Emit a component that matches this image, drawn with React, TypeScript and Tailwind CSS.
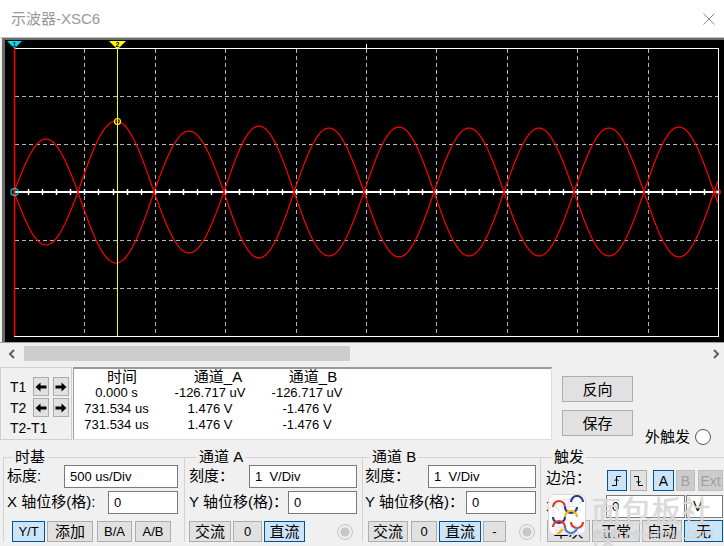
import React from "react";

const FONT = "font-['Liberation_Sans','Noto_Sans_CJK_SC',sans-serif]";

// half-cycle boundaries of the traced waveform (page x coords) and their peak heights
const bounds = [14, 78, 154, 224, 294, 364, 434, 504, 574, 644, 714, 784];
const amps = [53, 71, 61, 66, 64, 65, 64, 64, 64, 65, 64];
const CY = 192;

function waveA(x: number) {
  let h = 0;
  while (h < bounds.length - 2 && x > bounds[h + 1]) h++;
  const s = Math.sin((Math.PI * (x - bounds[h])) / (bounds[h + 1] - bounds[h]));
  return (h % 2 === 1 ? 1 : -1) * amps[h] * s;
}

const xs = Array.from({ length: 353 }, (_, i) => 14 + i * 2);
const ptsA = xs.map((x) => `${x},${(CY - waveA(x)).toFixed(1)}`).join(" ");
const ptsB = xs.map((x) => `${x},${(CY + waveA(x)).toFixed(1)}`).join(" ");
const vLines = Array.from({ length: 9 }, (_, i) => 14 + 70.4 * (i + 1));
const hLines = [96, 144, 240, 288];
const ticks = Array.from({ length: 51 }, (_, i) => 14 + 14.08 * i);

const Screen = () => (
  <svg width="719" height="302" viewBox="5 40 719 302" className="block">
    <rect x="5" y="40" width="719" height="302" fill="#000" />
    {vLines.map((x) => (
      <line key={x} x1={Math.round(x) + 0.5} y1={49} x2={Math.round(x) + 0.5} y2={336} stroke="#b8b8b8" strokeDasharray="4 3" />
    ))}
    {hLines.map((y) => (
      <line key={y} x1={15} y1={y + 0.5} x2={718} y2={y + 0.5} stroke="#b8b8b8" strokeDasharray="4 3" />
    ))}
    <rect x="14.5" y="48.5" width="704" height="288" fill="none" stroke="#fff" />
    <line x1="366.5" y1="44" x2="366.5" y2="48" stroke="#fff" />
    <line x1="14" y1="192" x2="718" y2="192" stroke="#fff" strokeWidth="2" />
    {ticks.map((t) => (
      <line key={t} x1={Math.round(t) + 0.5} y1={189} x2={Math.round(t) + 0.5} y2={195} stroke="#fff" strokeWidth="1.5" />
    ))}
    <polyline points={ptsA} fill="none" stroke="#ff0000" strokeWidth="1.2" />
    <polyline points={ptsB} fill="none" stroke="#ff0000" strokeWidth="1.2" />
    <line x1="14.5" y1="46" x2="14.5" y2="336" stroke="#ff0000" strokeWidth="1.5" />
    <line x1="117.5" y1="47" x2="117.5" y2="336" stroke="#ffff00" />
    <polygon points="7,41 22,41 14.5,48.5" fill="#00e0e8" />
    <text x="14.5" y="46.5" fontSize="7" fontWeight="bold" fill="#003050" textAnchor="middle" fontFamily="Liberation Sans, sans-serif">1</text>
    <polygon points="109,41 126,41 117.5,49.5" fill="#ffff00" />
    <text x="117.5" y="46.5" fontSize="7" fontWeight="bold" fill="#000" textAnchor="middle" fontFamily="Liberation Sans, sans-serif">2</text>
    <circle cx="117.5" cy="121.5" r="3" fill="none" stroke="#ffff00" strokeWidth="1.2" />
    <circle cx="14.5" cy="192" r="3.5" fill="none" stroke="#00e0e8" strokeWidth="1.2" />
    <circle cx="718" cy="192" r="2.5" fill="none" stroke="#ff0000" strokeWidth="1" />
  </svg>
);

const Chevron = ({ dir }: { dir: "l" | "r" }) => (
  <svg width="8" height="10" viewBox="0 0 8 10">
    <path d={dir === "l" ? "M6 1 L2 5 L6 9" : "M2 1 L6 5 L2 9"} fill="none" stroke="#606060" strokeWidth="2" />
  </svg>
);

const Arrow = ({ dir }: { dir: "l" | "r" }) => (
  <svg width="12" height="10" viewBox="0 0 12 10">
    <path d={dir === "l" ? "M0.5 5 L5.5 0.5 V3.5 H11.5 V6.5 H5.5 V9.5 Z" : "M11.5 5 L6.5 0.5 V3.5 H0.5 V6.5 H6.5 V9.5 Z"} fill="#000" />
  </svg>
);

type BtnProps = { className: string; sel?: boolean; dis?: boolean; children: React.ReactNode };
const Btn = ({ className, sel, dis, children }: BtnProps) => (
  <div
    className={`flex items-center justify-center border leading-none ${
      sel ? "bg-[#cce4f7] border-[#005499]" : dis ? "bg-[#cccccc] border-[#bfbfbf] text-[#a0a0a0]" : "bg-[#e1e1e1] border-[#adadad]"
    } ${className}`}
  >
    {children}
  </div>
);

const Field = ({ className, value }: { className: string; value: string }) => (
  <input
    readOnly
    value={value}
    className={`h-[23px] bg-white border border-[#7a7a7a] pl-[5px] text-[13px] outline-none whitespace-pre ${className}`}
  />
);

const Radio = () => (
  <svg width="16" height="16" viewBox="0 0 16 16">
    <circle cx="8" cy="8" r="7.5" fill="#eeeeee" stroke="#c4c4c4" />
    <circle cx="8" cy="8" r="4.5" fill="#c6c6c6" />
  </svg>
);

const Legend = ({ className, children }: { className: string; children: React.ReactNode }) => (
  <legend className={`px-[2px] text-[15px] leading-[16px] ${className}`}>{children}</legend>
);

const rows = [
  ["0.000 s", "-126.717 uV", "-126.717 uV"],
  ["731.534 us", "1.476 V", "-1.476 V"],
  ["731.534 us", "1.476 V", "-1.476 V"],
];

export default function App() {
  return (
    <div className={`relative w-[724px] h-[546px] overflow-hidden bg-[#f0f0f0] flex flex-col text-black ${FONT}`}>
      {/* title bar */}
      <div className="h-[37px] shrink-0 bg-white flex items-center justify-between pl-[11px] pr-[9px]">
        <span className="text-[15px] text-[#999999] leading-none">示波器-XSC6</span>
        <svg width="12" height="12" viewBox="0 0 12 12">
          <path d="M0.5 0.5 L11.5 11.5 M11.5 0.5 L0.5 11.5" stroke="#8a8a8a" strokeWidth="1" />
        </svg>
      </div>

      {/* scope screen */}
      <div className="shrink-0 pl-[2px] border-t border-[#c4c4c4]">
        <div className="border-t-2 border-l-[3px] border-[#6b6b6b]">
          <Screen />
        </div>
      </div>

      {/* horizontal scrollbar */}
      <div className="h-[22px] shrink-0 border-t border-[#a0a0a0] flex items-center">
        <div className="w-[24px] flex justify-center">
          <Chevron dir="l" />
        </div>
        <div className="w-[326px] h-[15px] bg-[#cdcdcd]" />
        <div className="flex-1" />
        <div className="w-[12px] flex justify-start">
          <Chevron dir="r" />
        </div>
      </div>

      {/* cursor readouts */}
      <div className="h-[76px] shrink-0 flex items-start">
        <div className="mt-[3px] w-[72px] h-[73px] border border-[#cfcfcf] flex flex-col pl-[9px] pt-[9px] text-[14px]">
          {["T1", "T2"].map((t, i) => (
            <div key={t} className={`flex items-center h-[19px] ${i ? "mt-[2px]" : ""}`}>
              <span className="w-[23px] leading-none">{t}</span>
              <Btn className="w-[16px] h-[19px]">
                <Arrow dir="l" />
              </Btn>
              <Btn className="ml-[4px] w-[16px] h-[19px]">
                <Arrow dir="r" />
              </Btn>
            </div>
          ))}
          <span className="mt-[3px] leading-[16px]">T2-T1</span>
        </div>

        <div className="mt-[3px] ml-[1px] w-[479px] h-[73px] bg-white border border-[#dcdcdc] border-t-2 border-t-[#9a9a9a] border-l-[#a0a0a0] pl-[9px] text-[13px] leading-[16px]">
          <div className="grid grid-cols-[67px_120px_74px] whitespace-nowrap">
            <span className="text-center pl-[11px] text-[15px]">时间</span>
            <span className="text-center pl-[16px] text-[15px]">通道_A</span>
            <span className="text-center pl-[12px] text-[15px]">通道_B</span>
            {rows.map((r, i) => (
              <React.Fragment key={i}>
                <span className="text-center">{r[0]}</span>
                <span className="text-center">{r[1]}</span>
                <span className="text-center">{r[2]}</span>
              </React.Fragment>
            ))}
          </div>
        </div>

        <div className="ml-[10px] mt-[12px] flex flex-col text-[15px]">
          <Btn className="w-[71px] h-[26px]">反向</Btn>
          <Btn className="mt-[8px] w-[71px] h-[26px]">保存</Btn>
        </div>

        <div className="self-end -mb-[6px] ml-[12px] flex items-center text-[15px] leading-[18px]">
          <span>外触发</span>
          <svg width="16" height="16" viewBox="0 0 16 16" className="ml-[5px]">
            <circle cx="8" cy="8" r="7.5" fill="#fff" stroke="#555" />
          </svg>
        </div>
      </div>

      {/* control groups */}
      <div className="flex-1 flex items-start pt-[9px] text-[15px]">
        <fieldset className="ml-[3px] w-[181px] border-t border-l border-[#d3d3d3] pl-[3px] pr-[6px]">
          <Legend className="ml-[6px]">时基</Legend>
          <div className="h-[23px] flex items-center justify-between">
            <span>标度:</span>
            <Field className="w-[114px]" value="500 us/Div" />
          </div>
          <div className="mt-[3px] h-[23px] flex items-center justify-between">
            <span>X 轴位移(格):</span>
            <Field className="w-[70px]" value="0" />
          </div>
          <div className="mt-[7px] h-[21px] flex items-center">
            <Btn sel className="ml-[5px] w-[33px] h-[21px] text-[13px]">Y/T</Btn>
            <Btn className="ml-[2px] w-[46px] h-[21px]">添加</Btn>
            <Btn className="ml-[4px] w-[35px] h-[21px] text-[13px]">B/A</Btn>
            <Btn className="ml-[3px] w-[36px] h-[21px] text-[13px]">A/B</Btn>
          </div>
        </fieldset>

        <fieldset className="w-[178px] border-t border-l border-[#d3d3d3] pl-[4px] pr-[5px]">
          <Legend className="ml-[8px]">通道 A</Legend>
          <div className="h-[23px] flex items-center justify-between">
            <span>刻度：</span>
            <Field className="w-[108px]" value="1  V/Div" />
          </div>
          <div className="mt-[3px] h-[23px] flex items-center justify-between">
            <span>Y 轴位移(格)：</span>
            <Field className="w-[69px]" value="0" />
          </div>
          <div className="mt-[7px] h-[21px] flex items-center">
            <Btn className="w-[42px] h-[21px]">交流</Btn>
            <Btn className="ml-[2px] w-[29px] h-[21px] text-[13px]">0</Btn>
            <Btn sel className="ml-[2px] w-[41px] h-[21px]">直流</Btn>
            <div className="ml-[32px] flex">
              <Radio />
            </div>
          </div>
        </fieldset>

        <fieldset className="w-[178px] border-t border-l border-[#d3d3d3] pl-[2px] pr-[4px]">
          <Legend className="ml-[5px]">通道 B</Legend>
          <div className="h-[23px] flex items-center justify-between">
            <span>刻度：</span>
            <Field className="w-[108px]" value="1  V/Div" />
          </div>
          <div className="mt-[3px] h-[23px] flex items-center justify-between">
            <span>Y 轴位移(格)：</span>
            <Field className="w-[70px]" value="0" />
          </div>
          <div className="mt-[7px] h-[21px] flex items-center">
            <Btn className="ml-[3px] w-[40px] h-[21px]">交流</Btn>
            <Btn className="ml-[3px] w-[26px] h-[21px] text-[13px]">0</Btn>
            <Btn sel className="ml-[2px] w-[42px] h-[21px]">直流</Btn>
            <Btn className="ml-[2px] w-[23px] h-[21px] text-[13px]">-</Btn>
            <div className="ml-[13px] flex">
              <Radio />
            </div>
          </div>
        </fieldset>

        <fieldset className="flex-1 border-t border-l border-[#d3d3d3] pl-[5px]">
          <Legend className="ml-[6px]">触发</Legend>
          <div className="h-[26px] flex">
            <span className="w-[61px] self-center">边沿：</span>
            <div className="self-end flex">
              <Btn sel className="w-[20px] h-[21px]">
                <svg width="12" height="12" viewBox="0 0 12 12">
                  <path d="M1 10.5 H5.5 V1.5 H10 M3.5 6 L5.5 4 L7.5 6" fill="none" stroke="#000" strokeWidth="1" />
                </svg>
              </Btn>
              <Btn className="ml-[3px] w-[17px] h-[21px]">
                <svg width="12" height="12" viewBox="0 0 12 12">
                  <path d="M1 1.5 H5.5 V10.5 H10 M3.5 6 L5.5 8 L7.5 6" fill="none" stroke="#000" strokeWidth="1" />
                </svg>
              </Btn>
              <Btn sel className="ml-[6px] w-[21px] h-[21px] text-[14px]">A</Btn>
              <Btn dis className="ml-[2px] w-[19px] h-[21px] text-[14px]">B</Btn>
              <Btn dis className="ml-[3px] w-[25px] h-[21px] text-[14px]">Ext</Btn>
            </div>
          </div>
          <div className="mt-[4px] h-[23px] flex items-center">
            <span className="w-[60px]">水平：</span>
            <Field className="w-[79px]" value="0" />
            <div className="ml-[1px] w-[37px] h-[23px] bg-white border border-[#7a7a7a] pl-[6px] text-[14px] flex items-center">V</div>
          </div>
          <div className="mt-[2px] h-[22px] flex items-center">
            <Btn className="ml-[1px] w-[43px] h-[22px]">单次</Btn>
            <Btn className="ml-[2px] w-[48px] h-[22px]">正常</Btn>
            <Btn className="ml-[2px] w-[40px] h-[22px]">自动</Btn>
            <Btn sel className="ml-[2px] w-[39px] h-[22px]">无</Btn>
          </div>
        </fieldset>
      </div>

      {/* site watermark overlay */}
      <div className="absolute left-[548px] top-[494px] w-[38px] h-[41px] rounded-[7px] bg-white/90 border border-[#d8d8d8] overflow-hidden">
        <svg width="38" height="41" viewBox="0 0 38 41">
          <path d="M4 12 A6 6 0 0 1 16 12" fill="none" stroke="#e03a2f" strokeWidth="2.2" />
          <path d="M16 12 A6 6 0 0 0 28 12" fill="none" stroke="#2d3a8c" strokeWidth="2.2" />
          <path d="M22 7 A6 6 0 0 1 34 7" fill="none" stroke="#2d3a8c" strokeWidth="2.2" />
          <path d="M4 22 A6 6 0 0 0 16 22" fill="none" stroke="#2d3a8c" strokeWidth="2.2" />
          <path d="M16 22 A6 6 0 0 1 28 22" fill="none" stroke="#f2b400" strokeWidth="2.2" />
          <path d="M22 27 A6 6 0 0 0 34 27" fill="none" stroke="#e03a2f" strokeWidth="2.2" />
          <path d="M4 32 A6 6 0 0 1 16 32" fill="none" stroke="#e03a2f" strokeWidth="2.2" />
          <path d="M16 32 A6 6 0 0 0 28 32" fill="none" stroke="#4a7fd0" strokeWidth="2.2" />
          <path d="M8 40 L14 34" fill="none" stroke="#f2b400" strokeWidth="2.2" />
        </svg>
      </div>
      <div className="absolute left-[592px] top-[493px] text-[29px] leading-[32px] tracking-[1px] text-white/55 [text-shadow:0_0_1px_#a8a8a8] font-['Noto_Sans_CJK_SC',sans-serif]">
        面包板社区
      </div>
      <div className="absolute left-[594px] top-[526px] text-[14px] leading-[16px] text-white/45 [text-shadow:0_0_1px_#b0b0b0]">
        mbb.eet-china.com
      </div>
    </div>
  );
}
